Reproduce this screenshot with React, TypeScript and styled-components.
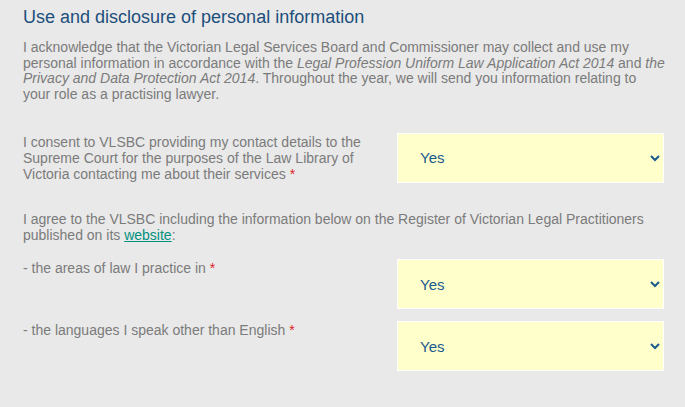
import { createGlobalStyle, styled } from "styled-components";

const Global = createGlobalStyle`
  html, body {
    margin: 0;
    padding: 0;
    background: #e9e9e9;
  }
  body {
    font-family: "Liberation Sans", Arial, sans-serif;
  }
`;

const Section = styled.section`
  padding: 5px 21px 20px 23px;
`;

const Heading = styled.h2`
  margin: 0 0 11px;
  font-size: 18px;
  font-weight: 400;
  line-height: 24px;
  color: #1d4f7c;
`;

const Para = styled.p<{ $after?: number }>`
  margin: 0 -2px ${(p) => p.$after ?? 0}px 0;
  font-size: 14px;
  line-height: 15.7px;
  color: #7b7b7b;
`;

const Row = styled.div<{ $after?: number }>`
  display: grid;
  grid-template-columns: 1fr 267px;
  column-gap: 30px;
  align-items: start;
  margin-bottom: ${(p) => p.$after ?? 12}px;
`;

const Label = styled.label`
  padding-top: 1px;
  font-size: 14px;
  line-height: 16px;
  color: #7b7b7b;
`;

const Req = styled.span`
  color: #e0202a;
`;

const Select = styled.select`
  width: 267px;
  height: 50px;
  box-sizing: border-box;
  border: 1px solid #ffffff;
  border-radius: 0;
  background: #ffffcc;
  padding: 0 6px 0 18px;
  font-family: "Liberation Sans", Arial, sans-serif;
  font-size: 15px;
  color: #1b5a8c;
  outline: none;
`;

const Link = styled.a`
  color: #00917f;
  text-decoration: underline;
`;

const YesNo = ({ id }: { id: string }) => (
  <Select id={id} defaultValue="Yes">
    <option>Yes</option>
    <option>No</option>
  </Select>
);

export default function App() {
  return (
    <>
      <Global />
      <Section>
        <Heading>Use and disclosure of personal information</Heading>
        <Para $after={30}>
          I acknowledge that the Victorian Legal Services Board and Commissioner may collect and use my
          personal information in accordance with the{" "}
          <em>Legal Profession Uniform Law Application Act 2014</em> and <em>the Privacy and Data Protection Act 2014</em>.
          Throughout the year, we will send you information relating to your role as a practising lawyer.
        </Para>
        <Row $after={29}>
          <Label htmlFor="library">
            I consent to VLSBC providing my contact details to the Supreme Court for the purposes of the Law
            Library of Victoria contacting me about their services <Req>*</Req>
          </Label>
          <YesNo id="library" />
        </Row>
        <Para $after={16}>
          I agree to the VLSBC including the information below on the Register of Victorian Legal Practitioners
          published on its <Link href="#">website</Link>:
        </Para>
        <Row>
          <Label htmlFor="areas">
            - the areas of law I practice in <Req>*</Req>
          </Label>
          <YesNo id="areas" />
        </Row>
        <Row>
          <Label htmlFor="languages">
            - the languages I speak other than English <Req>*</Req>
          </Label>
          <YesNo id="languages" />
        </Row>
      </Section>
    </>
  );
}
